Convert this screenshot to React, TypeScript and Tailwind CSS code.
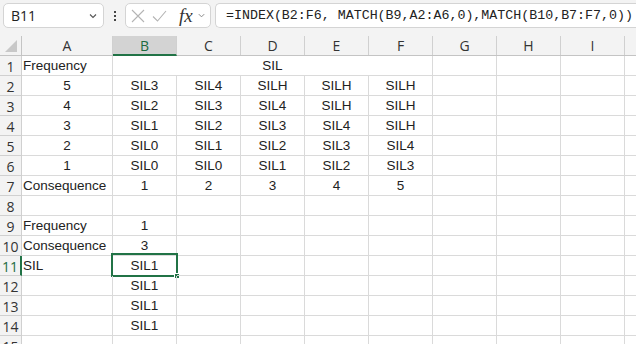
const cols = ["A", "B", "C", "D", "E", "F", "G", "H", "I", "J"];

type Cell = { v?: string; left?: boolean };

const rows: Cell[][] = [
  [],
  [{ v: "5" }, { v: "SIL3" }, { v: "SIL4" }, { v: "SILH" }, { v: "SILH" }, { v: "SILH" }],
  [{ v: "4" }, { v: "SIL2" }, { v: "SIL3" }, { v: "SIL4" }, { v: "SILH" }, { v: "SILH" }],
  [{ v: "3" }, { v: "SIL1" }, { v: "SIL2" }, { v: "SIL3" }, { v: "SIL4" }, { v: "SILH" }],
  [{ v: "2" }, { v: "SIL0" }, { v: "SIL1" }, { v: "SIL2" }, { v: "SIL3" }, { v: "SIL4" }],
  [{ v: "1" }, { v: "SIL0" }, { v: "SIL0" }, { v: "SIL1" }, { v: "SIL2" }, { v: "SIL3" }],
  [{ v: "Consequence", left: true }, { v: "1" }, { v: "2" }, { v: "3" }, { v: "4" }, { v: "5" }],
  [],
  [{ v: "Frequency", left: true }, { v: "1" }],
  [{ v: "Consequence", left: true }, { v: "3" }],
  [{ v: "SIL", left: true }, { v: "SIL1" }],
  [{}, { v: "SIL1" }],
  [{}, { v: "SIL1" }],
  [{}, { v: "SIL1" }],
  [],
];

const cellFont = { fontFamily: '"Liberation Sans", Arial, sans-serif' };
const uiFont = { fontFamily: '"Open Sans", "Noto Sans", sans-serif' };

function ToolBar() {
  return (
    <div className="flex items-start h-[36px] bg-[#f3f3f3] pt-[3px] pl-[3px]">
      {/* Name box */}
      <div className="w-[101px] h-[25px] bg-white border border-[#d4d4d4] rounded-[5px] flex items-center justify-between pl-[7px] pr-[5px]">
        <span className="text-[14px] text-[#222]" style={uiFont}>B11</span>
        <svg width="10" height="10" viewBox="0 0 10 10">
          <path d="M2 3.5 L5 6.5 L8 3.5" fill="none" stroke="#555" strokeWidth="1.1" />
        </svg>
      </div>
      {/* dots */}
      <div className="w-[21px] h-[25px] flex flex-col items-center justify-center gap-[2px]">
        <div className="w-[2px] h-[2px] bg-[#444]" />
        <div className="w-[2px] h-[2px] bg-[#444]" />
        <div className="w-[2px] h-[2px] bg-[#444]" />
      </div>
      {/* fx box */}
      <div className="w-[86px] h-[25px] bg-white border border-[#d4d4d4] rounded-[5px] flex items-center pl-[5px] gap-[7px]">
        <svg width="14" height="14" viewBox="0 0 14 14">
          <path d="M1 1 L13 13 M13 1 L1 13" stroke="#b4b4b4" strokeWidth="1.1" fill="none" />
        </svg>
        <svg width="15" height="14" viewBox="0 0 15 14">
          <path d="M1 7.5 L5.5 12 L14 2" stroke="#b4b4b4" strokeWidth="1.1" fill="none" />
        </svg>
        <span className="ml-[5px] text-[19px] italic text-[#333] leading-none" style={{ fontFamily: '"Liberation Serif", serif' }}>fx</span>
        <svg className="-ml-[3px]" width="9" height="9" viewBox="0 0 10 10">
          <path d="M2 3.5 L5 6.5 L8 3.5" fill="none" stroke="#888" strokeWidth="1.1" />
        </svg>
      </div>
      {/* formula */}
      <div className="ml-[4px] flex-1 h-[25px] bg-white border border-[#d4d4d4] border-r-0 rounded-l-[5px] flex items-center pl-[10px] overflow-hidden whitespace-nowrap">
        <span className="text-[13.3px] text-[#222]" style={{ fontFamily: '"Liberation Mono", monospace' }}>
          =INDEX(B2:F6, MATCH(B9,A2:A6,0),MATCH(B10,B7:F7,0))
        </span>
      </div>
    </div>
  );
}

function colWidth(i: number) {
  return i === 0 ? "w-[91px]" : "w-[64px]";
}

export default function App() {
  return (
    <div className="w-[636px] h-[344px] overflow-hidden bg-white">
      <ToolBar />
      {/* column headers */}
      <div className="flex h-[20px] bg-[#f3f3f3] border-b border-[#c4c4c4] text-[14px] text-[#333]" style={uiFont}>
        <div className="w-[22px] shrink-0 border-r border-[#c4c4c4] relative">
          <svg className="absolute left-[5px] top-[4px]" width="12" height="12" viewBox="0 0 12 12">
            <path d="M12 0 L12 12 L0 12 Z" fill="#c8c8c8" />
          </svg>
        </div>
        {cols.map((c, i) => (
          <div
            key={c}
            className={
              "shrink-0 flex items-center justify-center border-r border-[#d0d0d0] " +
              colWidth(i) +
              (c === "B" ? " bg-[#d3d3d3] text-[#1d6b3f] border-b-2 border-b-[#217346] h-[20px]" : "")
            }
          >
            {c}
          </div>
        ))}
      </div>
      {/* rows */}
      {rows.map((r, ri) => {
        const n = ri + 1;
        const sel = n === 11;
        return (
          <div key={n} className="flex h-[20px] text-[13.5px] text-[#222]">
            <div
              className={
                "w-[22px] shrink-0 bg-[#f3f3f3] border-b border-r border-[#d0d0d0] flex items-center justify-center text-[14px] pt-[1px] " +
                (sel ? "text-[#1d6b3f] border-r-2 border-r-[#217346]" : "text-[#333]")
              }
              style={uiFont}
            >
              {n}
            </div>
            {n === 1 ? (
              <>
                <div className="w-[91px] shrink-0 border-b border-r border-[#dadada] flex items-center pl-[1px] pt-[2px]" style={cellFont}>
                  Frequency
                </div>
                <div className="w-[320px] shrink-0 border-b border-r border-[#dadada] flex items-center justify-center pt-[2px]" style={cellFont}>
                  SIL
                </div>
                {cols.slice(6).map((c, i) => (
                  <div key={c} className={"shrink-0 border-b border-r border-[#dadada] " + colWidth(i + 6)} />
                ))}
              </>
            ) : (
              cols.map((c, ci) => {
                const cell = r[ci] || {};
                const isSel = sel && c === "B";
                return (
                  <div
                    key={c}
                    className={
                      "relative shrink-0 border-b border-r border-[#dadada] flex items-center whitespace-nowrap pt-[2px] " +
                      colWidth(ci) +
                      (cell.left ? " pl-[1px]" : " justify-center")
                    }
                    style={cellFont}
                  >
                    {cell.v}
                    {isSel && (
                      <div className="absolute -top-[3px] -left-[2px] -right-[2px] -bottom-[2px] border-2 border-[#217346]">
                        <div className="absolute -right-[4px] -bottom-[4px] w-[6px] h-[6px] bg-[#217346] border border-white" />
                      </div>
                    )}
                  </div>
                );
              })
            )}
          </div>
        );
      })}
    </div>
  );
}
